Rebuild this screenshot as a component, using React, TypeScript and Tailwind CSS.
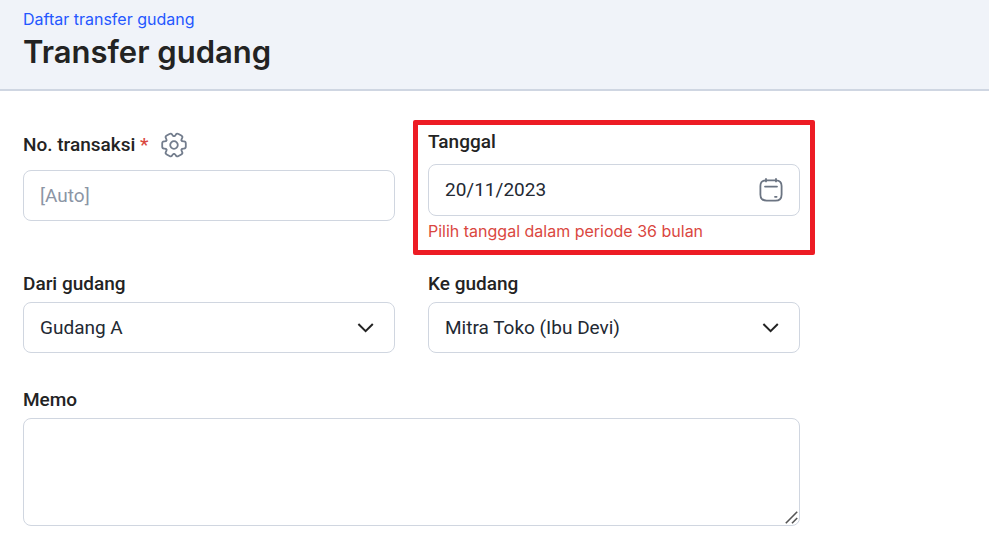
import React from 'react';

const controlClass =
  'block w-full rounded-lg border border-[#d0d6e0] bg-white px-4 font-[Roboto,sans-serif] text-[19px] text-[#232933] placeholder:text-[#8b95a5] placeholder:opacity-100 focus:outline-none focus:border-blue-500';

const labelClass = 'block font-[Roboto,sans-serif] text-[19px]/6 font-medium text-[#232323]';

function GearIcon() {
  return (
    <svg className="size-[26px]" viewBox="-13 -13 26 26" fill="none" stroke="#737d8d" strokeWidth={1.8} strokeLinecap="round">
      {[0, 60, 120, 180, 240, 300].map((angle) => (
        <path
          key={angle}
          transform={`rotate(${angle})`}
          d="M7.600-4.400C8.200-3.400 9.200-3.600 10-3.600C11.400-3.600 11.800-2.800 11.800-1.600V1.600C11.800 2.800 11.400 3.600 10 3.600C9.200 3.600 8.200 3.400 7.600 4.400"
        />
      ))}
      <circle r="3.800" />
    </svg>
  );
}

function CalendarIcon() {
  return (
    <svg className="size-6" viewBox="0 0 24 24" fill="none" stroke="#6b7482" strokeWidth={1.8} strokeLinecap="round">
      <path d="M7 2.400h10c3.600 0 5.600 2 5.600 5.600v8.400c0 4.200-2 6.200-6.200 6.200H7.600c-4.200 0-6.200-2-6.200-6.200V8c0-3.600 2-5.600 5.600-5.600Z" />
      <path d="M7 1v2.400M17 1v2.400M6 8.600h12M16 18.800h1.600" />
    </svg>
  );
}

function ChevronIcon() {
  return (
    <svg
      className="pointer-events-none absolute top-1/2 right-5 h-[10px] w-[18px] -translate-y-1/2"
      viewBox="0 0 18 10"
      fill="none"
      stroke="#232323"
      strokeWidth={2}
    >
      <path d="M1.400 1 8.600 8.200l7.200-7.200" />
    </svg>
  );
}

function SelectField({ id, label, options }: { id: string; label: string; options: string[] }) {
  return (
    <div className="flex flex-col gap-[6px]">
      <label htmlFor={id} className={labelClass}>{label}</label>
      <div className="relative">
        <select id={id} className={`${controlClass} h-[51px] appearance-none pt-px`}>
          {options.map((option) => (
            <option key={option}>{option}</option>
          ))}
        </select>
        <ChevronIcon />
      </div>
    </div>
  );
}

export default function App() {
  return (
    <div className="min-h-screen bg-white font-[Inter,sans-serif]">
      <header className="border-b-2 border-[#cfd6e2] bg-[#f0f3f9] px-[23px] pt-[7px] pb-[17px]">
        <a href="#" className="block w-fit text-base/6 text-[#2457ff] hover:underline">
          Daftar transfer gudang
        </a>
        <h1 className="text-[31px]/[41px] font-semibold text-[#232323]">Transfer gudang</h1>
      </header>

      <form className="max-w-[823px] px-[23px] pt-[39px] pb-4">
        <div className="grid grid-cols-2 gap-x-[33px] gap-y-[29px]">
          <div className="flex flex-col gap-[10px]">
            <div className="flex h-[30px] items-center gap-3">
              <label htmlFor="number" className={labelClass}>
                No. transaksi <span className="text-[#da473f]">*</span>
              </label>
              <button type="button" aria-label="Pengaturan nomor">
                <GearIcon />
              </button>
            </div>
            <input id="number" type="text" placeholder="[Auto]" className={`${controlClass} h-[51px]`} />
          </div>

          <div className="relative">
            <label htmlFor="date" className={labelClass}>Tanggal</label>
            <div className="relative mt-[10px]">
              <input id="date" type="text" defaultValue="20/11/2023" className={`${controlClass} h-[52px] pb-px`} />
              <button type="button" aria-label="Pilih tanggal" className="absolute top-1/2 right-[17px] -translate-y-1/2">
                <CalendarIcon />
              </button>
            </div>
            <p className="mt-[3px] text-base/6 text-[#da473f]">Pilih tanggal dalam periode 36 bulan</p>
            {/* highlight frame */}
            <div className="pointer-events-none absolute -inset-x-[15px] -top-[10px] -bottom-3 rounded-xs border-5 border-[#ed1c24]" />
          </div>

          <SelectField id="from" label="Dari gudang" options={['Gudang A']} />
          <SelectField id="to" label="Ke gudang" options={['Mitra Toko (Ibu Devi)']} />
        </div>

        <div className="mt-[35px] flex flex-col gap-[6px]">
          <label htmlFor="memo" className={labelClass}>Memo</label>
          <div className="relative">
            <textarea id="memo" className={`${controlClass} h-[108px] resize-none py-3`} />
            <svg
              className="pointer-events-none absolute right-[2px] bottom-[2px] size-[13px]"
              viewBox="0 0 13 13"
              stroke="#555"
              strokeWidth={1.6}
            >
              <path d="M.8 12.200 12.200 .8M7 12.200l5.200-5.200" />
            </svg>
          </div>
        </div>
      </form>
    </div>
  );
}
